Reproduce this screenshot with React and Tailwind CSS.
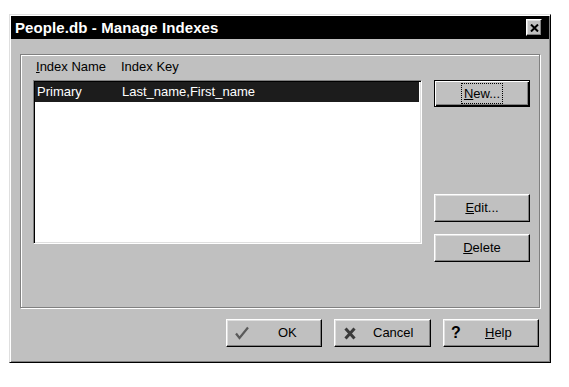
import React from "react";

const raised =
  "border border-t-white border-l-white border-r-black border-b-black shadow-[inset_-1px_-1px_0_#808080,inset_1px_1px_0_#dfdfdf]";

function SideButton({ children, def, className = "" }) {
  return (
    <div
      className={
        "w-[96px] flex items-center justify-center bg-[#c0c0c0] " +
        (def
          ? "border border-black shadow-[inset_1px_1px_0_#fff,inset_-1px_-1px_0_#000,inset_-2px_-2px_0_#808080]"
          : raised) +
        " " +
        className
      }
    >
      {children}
    </div>
  );
}

function CheckIcon() {
  return (
    <svg width="14" height="14" viewBox="0 0 14 14">
      <path d="M1 7.5 L4.5 12 L13 1.5" fill="none" stroke="#5a5a5a" strokeWidth="2.2" strokeLinejoin="miter" />
    </svg>
  );
}

function XIcon() {
  return (
    <svg width="12" height="13" viewBox="0 0 12 13">
      <path d="M1.5 1.5 L10.5 11.5 M10.5 1.5 L1.5 11.5" stroke="#3a3a3a" strokeWidth="3" fill="none" />
    </svg>
  );
}

export default function App() {
  return (
    <div
      className="w-[569px] h-[387px] bg-white pl-[9px] pt-[14px] text-[13px] text-black"
      style={{ fontFamily: '"Liberation Sans", Arial, sans-serif' }}
    >
      <div className="w-[542px] h-[349px] bg-[#c0c0c0] border border-t-[#dfdfdf] border-l-[#dfdfdf] border-r-black border-b-black shadow-[inset_1px_1px_0_#fff,inset_-1px_-1px_0_#808080] p-[1px] flex flex-col">
        {/* title bar */}
        <div className="h-[23px] bg-black flex items-center justify-between pl-[4px] pr-[7px]">
          <span className="text-white font-bold text-[15px] leading-none tracking-[0.1px]">
            People.db - Manage Indexes
          </span>
          <div className={"w-[16px] h-[17px] bg-[#c0c0c0] flex items-center justify-center " + raised}>
            <svg width="9" height="8" viewBox="0 0 9 8">
              <path d="M1 0.5 L8 7.5 M8 0.5 L1 7.5" stroke="#000" strokeWidth="2" fill="none" />
            </svg>
          </div>
        </div>

        {/* body */}
        <div className="flex flex-col pl-[9px] pt-[15px]">
          <div className="w-[520px] h-[254px] border border-[#808080] shadow-[inset_1px_1px_0_#fff,1px_1px_0_#fff] flex pl-[12px] pr-[9px] pt-[4px]">
            <div className="flex flex-col">
              <div className="flex h-[16px] leading-[16px] pl-[3px]">
                <span className="w-[85px]">
                  <u>I</u>ndex Name
                </span>
                <span>Index Key</span>
              </div>
              <div className="mt-[5px] w-[389px] h-[164px] bg-white border border-t-[#808080] border-l-[#808080] border-r-white border-b-white shadow-[inset_1px_1px_0_#000,inset_-1px_-1px_0_#dfdfdf] p-[1px] pr-[2px]">
                <div className="h-[20px] bg-[#1c1c1c] text-white flex items-center pl-[2px] pb-[1px]">
                  <span className="w-[85px]">Primary</span>
                  <span>Last_name,First_name</span>
                </div>
              </div>
            </div>
            <div className="ml-[12px] pt-[21px] flex flex-col">
              <SideButton def className="h-[27px]">
                <span className="border border-dotted border-black px-[2px] h-[21px] flex items-center">
                  <u>N</u>ew...
                </span>
              </SideButton>
              <SideButton className="h-[28px] mt-[87px]">
                <span>
                  <u>E</u>dit...
                </span>
              </SideButton>
              <SideButton className="h-[28px] mt-[12px]">
                <span>
                  <u>D</u>elete
                </span>
              </SideButton>
            </div>
          </div>

          {/* bottom buttons */}
          <div className="mt-[11px] flex justify-end gap-[12px] pr-[10px]">
            <div className={"w-[96px] h-[28px] flex items-center pl-[8px] bg-[#c0c0c0] " + raised}>
              <CheckIcon />
              <span className="ml-[29px]">OK</span>
            </div>
            <div className={"w-[97px] h-[28px] flex items-center pl-[9px] bg-[#c0c0c0] " + raised}>
              <XIcon />
              <span className="ml-[17px]">Cancel</span>
            </div>
            <div className={"w-[96px] h-[28px] flex items-center pl-[7px] bg-[#c0c0c0] " + raised}>
              <span className="font-bold text-[16px] leading-none w-[8px]">?</span>
              <span className="ml-[26px]">
                <u>H</u>elp
              </span>
            </div>
          </div>
        </div>
      </div>
    </div>
  );
}
